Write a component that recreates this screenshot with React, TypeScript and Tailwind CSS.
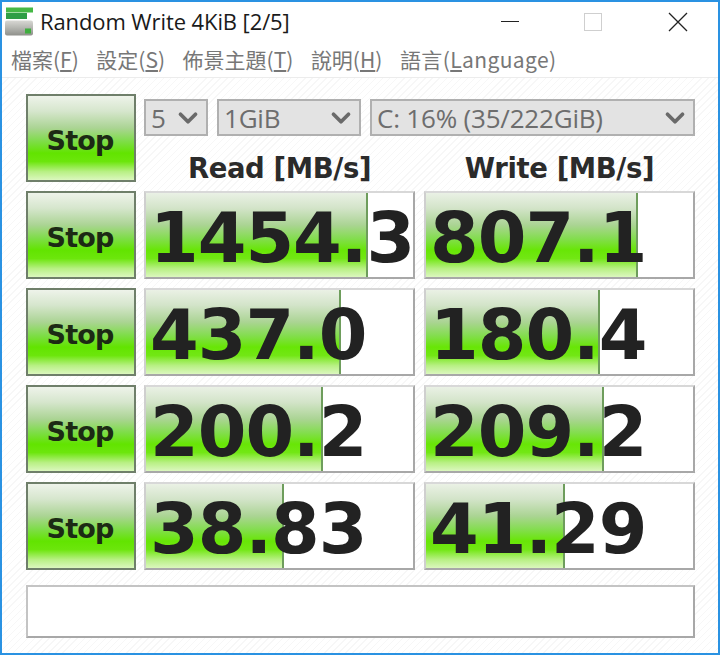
import { ChevronDown } from "lucide-react";

const rows = [
  { read: "1454.3", readBar: 222, write: "807.1", writeBar: 212 },
  { read: "437.0", readBar: 195, write: "180.4", writeBar: 174 },
  { read: "200.2", readBar: 177, write: "209.2", writeBar: 178 },
  { read: "38.83", readBar: 138, write: "41.29", writeBar: 139 },
];

const stopGradient =
  "bg-[linear-gradient(180deg,#eef3ea_0%,#d6e6cd_18%,#abd494_38%,#7edd48_54%,#62e400_68%,#6ce60c_78%,#b8f084_90%,#dbf7be_100%)]";
const barGradient =
  "bg-[linear-gradient(180deg,#eaf1e5_0%,#d3e4c9_18%,#abd494_38%,#84dd50_54%,#68e606_68%,#72e714_78%,#b8f084_90%,#dbf7be_100%)]";

function StopButton() {
  return (
    <button
      type="button"
      className={`flex h-[88px] w-[110px] items-center justify-center border-2 border-[#6f7f6a] pr-[2px] pt-[7px] font-['DejaVu_Sans',sans-serif] text-[27px] font-bold tracking-[-0.8px] text-[#1c2a14] ${stopGradient}`}
    >
      Stop
    </button>
  );
}

function Dropdown({ label, width }: { label: string; width: string }) {
  return (
    <div
      className={`flex h-[37px] items-center justify-between border-2 border-[#b0b0b0] bg-[#e3e3e3] pl-[5px] pr-[3px] font-['Open_Sans',sans-serif] text-[26px] tracking-[-0.2px] text-[#6d6d6d] ${width}`}
    >
      <span className="whitespace-nowrap pt-[2px]">{label}</span>
      <ChevronDown className="size-[30px] text-[#6a6a6a]" strokeWidth={3} />
    </div>
  );
}

function Meter({ value, bar }: { value: string; bar: number }) {
  return (
    <div className="relative flex h-[88px] w-[271px] items-center overflow-hidden border-2 border-b-[#a8a8a8] border-l-[#cfcfcf] border-r-[#a8a8a8] border-t-[#d8d8d8] bg-white">
      <div
        className={`absolute inset-y-0 left-0 border-r-2 border-r-[#6e9d5c] ${barGradient}`}
        style={{ width: bar }}
      />
      <span className="relative w-full whitespace-nowrap pl-[4px] pt-[6px] font-['DejaVu_Sans',sans-serif] text-[70px] font-bold leading-none tracking-[-1px] text-[#222222]">
        {value}
      </span>
    </div>
  );
}

export default function App() {
  return (
    <div className="flex h-[655px] w-[720px] flex-col overflow-hidden border-2 border-[#2a92e2] bg-white">
      {/* title bar */}
      <div className="flex h-[39px] shrink-0 items-center pl-[2px] font-['Open_Sans',sans-serif] text-[22px] text-[#1a1a1a]">
        <svg width="32" height="30" viewBox="0 0 32 30" className="shrink-0">
          <defs>
            <linearGradient id="drive" x1="0" y1="0" x2="0" y2="1">
              <stop offset="0" stopColor="#d8d8d4" />
              <stop offset="0.45" stopColor="#b8b9b4" />
              <stop offset="1" stopColor="#8f908b" />
            </linearGradient>
          </defs>
          <rect x="2" y="0.5" width="27" height="5" fill="#45b845" />
          <rect x="2" y="6" width="21" height="6" fill="#2f9e45" />
          <rect x="1" y="13.5" width="28" height="15" rx="2" fill="url(#drive)" />
          <rect x="21" y="21.5" width="6" height="5" fill="#3fae3f" />
        </svg>
        <span className="ml-[4px] whitespace-nowrap pb-[1px] tracking-[-0.1px]">Random Write 4KiB [2/5]</span>
        <div className="ml-auto flex items-center">
          <div className="h-[1.5px] w-[18px] bg-[#222222]" />
          <div className="ml-[65px] size-[18px] border border-[#cfcfcf]" />
          <svg width="20" height="20" viewBox="0 0 20 20" className="ml-[66px] mr-[30px]">
            <path d="M1 1 L19 19 M19 1 L1 19" stroke="#222222" strokeWidth="1.3" fill="none" />
          </svg>
        </div>
      </div>

      {/* menu */}
      <div className="flex h-[37px] shrink-0 items-center gap-[17.5px] border-b border-[#ececec] pl-[9px] pt-[2px] font-['Noto_Sans_CJK_TC','Open_Sans',sans-serif] text-[21px] text-[#777777]">
        <span>檔案(<span className="underline">F</span>)</span>
        <span>設定(<span className="underline">S</span>)</span>
        <span>佈景主題(<span className="underline">T</span>)</span>
        <span>說明(<span className="underline">H</span>)</span>
        <span className="tracking-[0.4px]">語言(<span className="underline">L</span>anguage)</span>
      </div>

      {/* body */}
      <div className="flex flex-1 flex-col bg-[repeating-linear-gradient(135deg,#ffffff_0,#ffffff_4px,#f7f7f7_4px,#f7f7f7_5px)] pl-[24px] pt-[16px]">
        <div className="flex gap-[8px]">
          <StopButton />
          <div className="flex flex-col">
            <div className="mt-[5px] flex gap-[9px]">
              <Dropdown label="5" width="w-[64px]" />
              <Dropdown label="1GiB" width="w-[144px]" />
              <Dropdown label="C: 16% (35/222GiB)" width="w-[325px]" />
            </div>
            <div className="mt-[19px] flex gap-[9px] font-['DejaVu_Sans',sans-serif] text-[27.5px] font-bold leading-[26px] tracking-[-0.4px] text-[#2b2b2b]">
              <span className="w-[271px] text-center">Read [MB/s]</span>
              <span className="w-[271px] text-center">Write [MB/s]</span>
            </div>
          </div>
        </div>

        <div className="mt-[9px] flex flex-col gap-[9px]">
          {rows.map((row) => (
            <div key={row.read} className="flex gap-[8px]">
              <StopButton />
              <div className="flex gap-[9px]">
                <Meter value={row.read} bar={row.readBar} />
                <Meter value={row.write} bar={row.writeBar} />
              </div>
            </div>
          ))}
        </div>

        <div className="mt-[15px] h-[53px] w-[669px] border-2 border-b-[#a8a8a8] border-l-[#c4c4c4] border-r-[#a8a8a8] border-t-[#c4c4c4] bg-white" />
      </div>
    </div>
  );
}
